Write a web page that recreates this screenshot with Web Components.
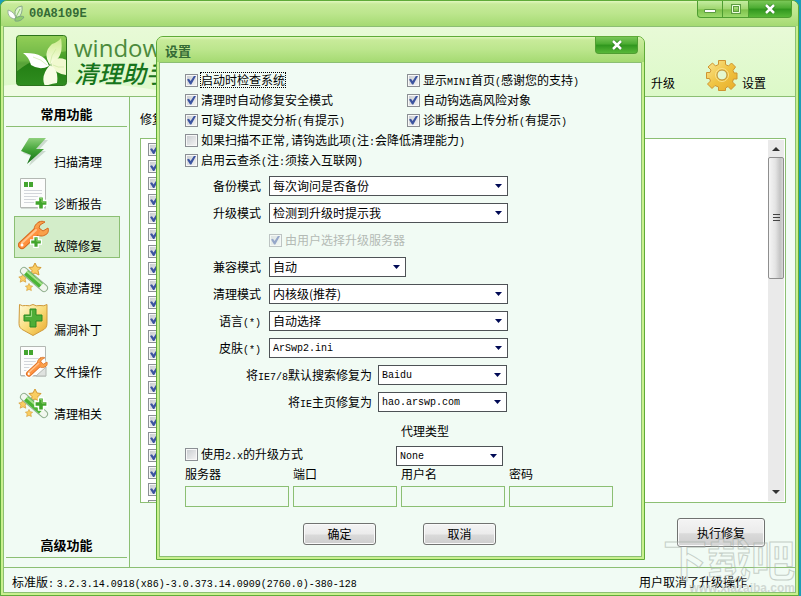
<!DOCTYPE html>
<html lang="zh-CN">
<head>
<meta charset="utf-8">
<title>Windows 清理助手</title>
<style>
  :root {
    --cjk: "Noto Sans CJK SC", sans-serif;
    --mono: "Liberation Mono", "Noto Sans CJK SC", monospace;
    --paper: #f1fbf4;
    --line: #8cbf73;
    --edge: #5fab38;
    --glow: #c9f08f;
  }

  body {
    margin: 0;
    background: #1a9db8;
    font: 12px/16px var(--cjk);
    color: #000;
  }
</style>
</head>
<body>
<cleaner-app></cleaner-app>

<script>
// Latin runs are set in a half-width face beside the full-width characters
const mixed = text => text.replace(/[\x21-\x7e]+/g, run => `<span class="latin">${run}</span>`);

const latinStyle = /* css */`
  .latin {
    font-family: var(--mono);
    font-size: 10px;
    line-height: 10px;
  }
`;

const plus = (x, y, s = 1) => `
  <g transform="translate(${x} ${y}) scale(${s})">
    <path d="M-2-6h4v4h4v4h-4v4h-4v-4h-4v-4h4z" stroke="#fff" stroke-width="3" fill="#fff"/>
    <path d="M-2-6h4v4h4v4h-4v4h-4v-4h-4v-4h4z" fill="#41a52b"/>
    <path d="M-1-5h2v4h4" stroke="#8fd36f" fill="none"/>
  </g>`;

const sheet = `
  <path d="M3 3h25v30H3z" fill="#bfc5bf" opacity=".6"/>
  <path d="M2.500 2.500h25v29h-25z" fill="#fcfdfc" stroke="#b3b8b3"/>
  <path d="M6 6h4v5H6zM11 6h4v5h-4z" fill="#44a52f"/>
  <path d="M6 14.500h18M6 17.500h18M6 20.500h18M6 23.500h12M6 26.500h12" stroke="#d3d6db"/>`;

const star = (x, y, s) => `
  <path transform="translate(${x} ${y}) scale(${s})" d="M0-6l2 4 4 .5-3 3 1 4.500-4-2-4 2 1-4.500-3-3 4-.5z"
    fill="#f9cd62" stroke="#d49a33" stroke-linejoin="round"/>`;

const wand = `
  ${star(17, 9, 1)}${star(5, 18, 0.7)}${star(11, 27, 0.6)}
  <path d="M6 11l20 17" stroke="#8fae8d" stroke-width="8" stroke-linecap="round"/>
  <path d="M6 11l20 17" stroke="#f1f7ee" stroke-width="6" stroke-linecap="round"/>
  <path d="M8 12.500l15 13" stroke="#4bb535" stroke-width="6"/>
  <path d="M9 11.500l15 13" stroke="#a5e28c" stroke-width="2"/>`;

const wrench = `
  <g stroke-linecap="round" stroke-linejoin="round">
    <path d="M4 27L19 13" stroke="#d66a20" stroke-width="8"/>
    <path d="M21 4c-4 2-6 6-4 10s7 5 10 3c3-1 4-4 3-7l-5 3-4-3 1-3 5-3c-2-1-4-1-6 0z" fill="#f9a14b" stroke="#d66a20"/>
    <path d="M4 27L19 13" stroke="#ff9240" stroke-width="6"/>
    <path d="M4 25L18 12" stroke="#ffc58b" stroke-width="2"/>
    <circle cx="4" cy="27" r="1.500" fill="#fff"/>
  </g>`;

const icons = {
  bolt: {
    size: [34, 36],
    body: `
      <linearGradient id="g" x2="0" y2="1"><stop stop-color="#8fd07c"/><stop offset=".5" stop-color="#3da033"/><stop offset="1" stop-color="#126b15"/></linearGradient>
      <path d="M13 6h17L20 17h8L11 32l4-9-10-4z" fill="#b4c4b6" opacity=".6"/>
      <path d="M11 4h17L18 15h8L9 30l4-9-10-4z" fill="url(#g)"/>`,
  },
  report: { size: [34, 36], body: sheet + plus(23, 27, 0.9) },
  wrench: { size: [34, 36], body: wrench + plus(18, 24, 0.8) },
  wand: { size: [34, 36], body: wand },
  shield: {
    size: [34, 36],
    body: `
      <linearGradient id="g" x2="1" y2="1"><stop stop-color="#fffbd9"/><stop offset=".5" stop-color="#f9dc7a"/><stop offset="1" stop-color="#e9a829"/></linearGradient>
      <path d="M1.500 2.500q3 2 6 1 4 1 7.500-1 3 2 7 1 4 1 7-1v19q0 5-5 7l-9 5-9-5q-5-2-5-7z" fill="url(#g)" stroke="#cf9a3c"/>
      <path d="M12 7h6v6h6v6h-6v6h-6v-6H6v-6h6z" fill="#4fae37" stroke="#2c8a24"/>
      <path d="M13.500 8.500v6h-6" fill="none" stroke="#9dda82"/>`,
  },
  fileop: {
    size: [34, 36],
    body: `${sheet}<path d="M18 32l10-9v9z" fill="#dfe2df" stroke="#b3b8b3"/>
      <g transform="translate(8 11) scale(.7)"><path d="M4 27L22 10" stroke="#fff" stroke-width="12" stroke-linecap="round"/>${wrench}</g>`,
  },
  wandplus: { size: [34, 36], body: wand + plus(23, 18, 0.9) },
  gear: {
    size: [32, 32],
    body: `
      <linearGradient id="g" x2="1" y2="1"><stop stop-color="#fbe796"/><stop offset=".5" stop-color="#f0c443"/><stop offset="1" stop-color="#e8ac27"/></linearGradient>
      <path d="M12.500 1.500h7v4l3 1.500 3-3 4 4-2.500 3.500 1 2.500h3v6h-3.500l-1 3 3 3-4.500 4.500-3-3-2.500 1.500v2.500h-7V28L9 26.500l-3 3L1.500 25l3-3-1-2.500H.5v-6h3.500L5 11 2 8l4.500-4 3 3 3-1.500z"
        fill="url(#g)" stroke="#cf9430" stroke-linejoin="round"/>
      <circle cx="16" cy="16" r="5" fill="#e4f8d2" stroke="#b98c35"/>
      <circle cx="16" cy="16" r="6.500" fill="none" stroke="#fae28b"/>`,
  },
  flower: {
    size: [51, 51],
    body: `
      <linearGradient id="g" x2="0" y2="1"><stop stop-color="#7cc142"/><stop offset=".5" stop-color="#3f9a25"/><stop offset=".55" stop-color="#237e14"/><stop offset="1" stop-color="#2f8d1f"/></linearGradient>
      <linearGradient id="p" x2="0" y2="1"><stop stop-color="#cdeb8c"/><stop offset="1" stop-color="#fbffe8"/></linearGradient>
      <clipPath id="c"><rect x="1" y="1" width="49" height="49" rx="3"/></clipPath>
      <rect x=".5" y=".5" width="50" height="50" rx="3" fill="url(#g)" stroke="#2d741d"/>
      <g clip-path="url(#c)">
        <path d="M0 0h51v16Q20 20 0 37z" fill="#bce77d" opacity=".35"/>
        <path d="M34 30Q26 18 36 9q6-2 9-6 3 18-7 24z" fill="url(#p)"/>
        <path d="M33 31Q24 36 15 30 13 22 7 18q22-1 26 13z" fill="#fff"/>
        <path d="M35 30Q38 20 51 25v15Q39 39 35 30z" fill="#f1f9d0"/>
        <path d="M34 30q9 4 7 18-6 1-12 3-5-10 5-21z" fill="#f8fde4"/>
        <path d="M34 29q1-9 6-15M31 30q-6-6-14-8M37 30q5 3 11 2" fill="none" stroke="#c6e69b" stroke-width=".6"/>
      </g>`,
  },
  leaves: {
    size: [18, 18],
    body: `
      <path d="M8 10Q7 2 15 1q1 8-4 12z" fill="#dff5d0" stroke="#8aa98b"/>
      <path d="M7 14Q0 12 1 5q7 2 8 9z" fill="#fff" stroke="#9cb39d"/>
      <path d="M8 13q6-3 9-1-3 5-9 4z" fill="#8fce6e" stroke="#7ea67f"/>
      <path d="M9 12l4-8" stroke="#8cc46c"/>`,
  },
};

class AppIcon extends HTMLElement {
  connectedCallback() {
    const { size: [w, h], body } = icons[this.getAttribute("name")];
    this.attachShadow({ mode: "open" }).innerHTML = /* html */`
    <style>
      :host { display: block; flex: none; }
      svg { display: block; }
    </style>
    <svg width="${w}" height="${h}" viewBox="0 0 ${w} ${h}" aria-hidden="true">${body}</svg>`;
  }
}

customElements.define("app-icon", AppIcon);

// Skinned frame shared by the main window and its dialogs
class SkinWindow extends HTMLElement {
  static get styles() {
    return /* css */`
      :host {
        display: flex;
        flex-direction: column;
        box-sizing: border-box;
        border: 1px solid var(--edge);
        border-radius: 7px 7px 0 0;
        background: var(--glow);
      }

      header {
        display: flex;
        align-items: center;
        gap: 4px;
        box-sizing: border-box;
        height: 25px;
        padding: 0 6px;
        border-radius: 6px 6px 0 0;
        background: linear-gradient(#e2f8bf, #c8eb9a 3px, #bce68d 50%, #a5da72);
      }

      h1 {
        flex: 1;
        margin: 0;
        font: bold 12px/16px var(--mono);
        color: #346b35;
      }

      :host([role="dialog"]) h1 {
        padding: 2px 0 0 2px;
        font: bold 13px/16px var(--cjk);
      }

      .buttons {
        display: flex;
        align-self: flex-start;
      }

      button {
        display: grid;
        place-items: center;
        width: 26px;
        height: 17px;
        padding: 0;
        border: 1px solid #4f9e31;
        border-top: 0;
        border-left-width: 0;
        background: linear-gradient(#c4eda0, #9fd66f 50%, #7fc24c 55%, #9bda6c);
      }

      button:first-child {
        border-left-width: 1px;
        border-bottom-left-radius: 4px;
      }

      button.close {
        width: 43px;
        border-bottom-right-radius: 4px;
        background: linear-gradient(#79c757, #4aab30 45%, #2f961d 50%, #58b838);
      }

      main {
        flex: 1;
        display: flex;
        flex-direction: column;
        min-height: 0;
        margin: 0 2px 2px;
        border: 1px solid var(--line);
        background: var(--paper);
      }
    `;
  }

  connectedCallback() {
    const tools = this.hasAttribute("resizable") ? `
      <button aria-label="最小化"><svg width="12" height="9"><path d="M.5 4.500h11v3H.5z" fill="#fff" stroke="#5d9c42"/></svg></button>
      <button aria-label="最大化"><svg width="10" height="10"><path d="M1.500 1.500h7v7h-7z" fill="none" stroke="#5d9c42" stroke-width="3"/><path d="M1.500 1.500h7v7h-7z" fill="none" stroke="#efffe0"/></svg></button>` : "";
    this.attachShadow({ mode: "open" }).innerHTML = /* html */`
    <style>${SkinWindow.styles}</style>
    <header>
      <slot name="icon"></slot>
      <h1>${this.getAttribute("heading")}</h1>
      <div class="buttons">
        ${tools}
        <button class="close" aria-label="关闭"><svg width="12" height="10"><path d="M2 1l8 8M10 1L2 9" stroke="#277d1a" stroke-width="4"/><path d="M2 1l8 8M10 1L2 9" stroke="#fff" stroke-width="2.500"/></svg></button>
      </div>
    </header>
    <main><slot></slot></main>`;
  }
}

customElements.define("skin-window", SkinWindow);

class NavItem extends HTMLElement {
  connectedCallback() {
    this.attachShadow({ mode: "open" }).innerHTML = /* html */`
    <style>
      :host { display: block; }

      button {
        display: flex;
        align-items: flex-end;
        gap: 2px;
        box-sizing: border-box;
        width: 100%;
        height: 42px;
        padding: 0 0 3px 3px;
        border: 1px solid transparent;
        background: none;
        font: inherit;
        color: inherit;
      }

      :host([active]) button {
        border-color: var(--line);
        background: #d3edc9;
      }
    </style>
    <button><app-icon name="${this.getAttribute("icon")}"></app-icon><slot></slot></button>`;
  }
}

customElements.define("nav-item", NavItem);

class CheckBox extends HTMLElement {
  static get styles() {
    return /* css */`
      :host {
        display: block;
        white-space: nowrap;
      }

      label {
        display: flex;
        align-items: center;
        gap: 2px;
      }

      input {
        appearance: none;
        display: grid;
        place-items: center;
        flex: none;
        box-sizing: border-box;
        width: 13px;
        height: 13px;
        margin: 0;
        border: 1px solid #8b8f94;
        outline: 1px solid #f7f7f7;
        outline-offset: -2px;
        background: linear-gradient(135deg, #c6cace, #f6f6f6);
      }

      input:checked::before {
        content: "";
        width: 9px;
        height: 9px;
        background: #3d55a0;
        clip-path: polygon(0 45%, 22% 36%, 40% 62%, 80% 0, 100% 6%, 48% 100%, 34% 100%);
      }

      .text {
        padding: 0 1px;
      }

      :host([focused]) .text {
        outline: 1px dotted #000;
        outline-offset: -1px;
      }

      input:disabled {
        opacity: .5;
      }

      input:disabled + .text {
        color: #b4bab5;
      }
      ${latinStyle}
    `;
  }

  connectedCallback() {
    const label = this.getAttribute("label") ?? "";
    const flags = ["checked", "disabled"].filter(f => this.hasAttribute(f)).join(" ");
    this.attachShadow({ mode: "open" }).innerHTML = /* html */`
    <style>${CheckBox.styles}</style>
    <label><input type="checkbox" ${flags}>${label && `<span class="text">${mixed(label)}</span>`}</label>`;
  }
}

customElements.define("check-box", CheckBox);

class ComboField extends HTMLElement {
  static get styles() {
    return /* css */`
      :host {
        display: flex;
        align-items: center;
        gap: 8px;
        white-space: nowrap;
      }

      label {
        width: var(--label, 76px);
        text-align: right;
      }

      select {
        appearance: none;
        box-sizing: border-box;
        width: var(--field, 239px);
        height: 20px;
        padding: 0 16px 0 3px;
        border: 1px solid #4e5256;
        border-radius: 0;
        background: #fff url("data:image/svg+xml,%3Csvg xmlns='http://www.w3.org/2000/svg' width='7' height='4'%3E%3Cpath d='M0 0h7L3.500 4z' fill='%23000a55'/%3E%3C/svg%3E") no-repeat right 5px center;
        font: inherit;
        line-height: 16px;
        color: #000;
      }

      select.latin {
        padding-top: 2px;
        font: 10px/14px var(--mono);
      }

      :host([stacked]) {
        flex-direction: column;
        align-items: flex-start;
        gap: 7px;
      }

      :host([stacked]) label {
        box-sizing: border-box;
        padding-left: 5px;
        text-align: left;
      }
      ${latinStyle}
    `;
  }

  connectedCallback() {
    const value = this.getAttribute("value");
    const latin = /^[\x20-\x7e]+$/.test(value) ? "latin" : "";
    this.attachShadow({ mode: "open" }).innerHTML = /* html */`
    <style>${ComboField.styles}</style>
    <label for="combo">${mixed(this.getAttribute("label"))}</label>
    <select id="combo" class="${latin}"><option>${value}</option></select>`;
  }
}

customElements.define("combo-field", ComboField);

class TextField extends HTMLElement {
  connectedCallback() {
    const type = this.getAttribute("type") ?? "text";
    this.attachShadow({ mode: "open" }).innerHTML = /* html */`
    <style>
      :host { display: block; }

      label {
        display: block;
        margin-bottom: 4px;
      }

      input {
        display: block;
        box-sizing: border-box;
        width: 104px;
        height: 21px;
        border: 1px solid var(--line);
        background: transparent;
      }
    </style>
    <label for="text">${this.getAttribute("label")}</label>
    <input id="text" type="${type}">`;
  }
}

customElements.define("text-field", TextField);

class PushButton extends HTMLElement {
  connectedCallback() {
    this.attachShadow({ mode: "open" }).innerHTML = /* html */`
    <style>
      :host { display: block; }

      button {
        display: block;
        box-sizing: border-box;
        width: 100%;
        height: 100%;
        border: 1px solid #707270;
        border-radius: 3px;
        padding: 0;
        background: linear-gradient(#f4f4f4, #ebebeb 50%, #dadada 55%, #cdcdcd);
        box-shadow: inset 0 0 0 1px #fafafa;
        font: inherit;
        line-height: 16px;
        color: #000;
      }
    </style>
    <button><slot></slot></button>`;
  }
}

customElements.define("push-button", PushButton);

class RepairList extends HTMLElement {
  static get styles() {
    return /* css */`
      :host {
        display: flex;
        min-height: 0;
        border: 1px solid var(--line);
        background: #fff;
        overflow: hidden;
      }

      .rows {
        flex: 1;
        height: 0;
        min-height: 100%;
        box-sizing: border-box;
        padding: 3px 7px;
      }

      check-box {
        padding: 1px 0 3px;
      }

      .scroll {
        display: flex;
        flex-direction: column;
        width: 16px;
        margin: 1px;
        background: #eaeaea;
      }

      .scroll svg {
        display: block;
        margin: 6px 4px;
      }

      .thumb {
        flex: 37;
        display: grid;
        place-items: center;
        border: 1px solid #8e8e8e;
        border-radius: 2px;
        background: linear-gradient(to right, #f5f5f5, #e4e4e4 45%, #c4c4c4 80%, #d6d6d6);
      }

      .rest {
        flex: 63;
      }
    `;
  }

  connectedCallback() {
    this.attachShadow({ mode: "open" }).innerHTML = /* html */`
    <style>${RepairList.styles}</style>
    <div class="rows">${"<check-box checked></check-box>".repeat(22)}</div>
    <div class="scroll">
      <svg width="8" height="5"><path d="M0 5l4-4 4 4z" fill="#333"/></svg>
      <div class="thumb"><svg width="7" height="8"><path d="M0 .5h7M0 3.500h7M0 6.500h7" stroke="#444"/></svg></div>
      <div class="rest"></div>
      <svg width="8" height="5"><path d="M0 0h8L4 4z" fill="#333"/></svg>
    </div>`;
  }
}

customElements.define("repair-list", RepairList);

class SettingsForm extends HTMLElement {
  static get styles() {
    return /* css */`
      :host {
        display: block;
        padding: 7px 28px 11px 25px;
      }

      .checks {
        display: grid;
        grid-template-columns: 222px 1fr;
        grid-auto-rows: 20px;
        align-items: center;
      }

      .wide {
        grid-column: 1 / -1;
      }

      .modes {
        display: grid;
        grid-auto-rows: 20px;
        align-items: center;
        gap: 7px;
        margin-top: 6px;
      }

      .indent {
        margin-left: 84px;
      }

      .short {
        --field: 137px;
      }

      .ie {
        --label: 187px;
        --field: 129px;
        gap: 6px;
      }

      .proxy {
        display: flex;
        align-items: flex-end;
        justify-content: space-between;
        margin: 11px 110px 0 0;

        & combo-field {
          --label: 107px;
          --field: 107px;
        }

        & check-box {
          padding-bottom: 4px;
        }
      }

      .account {
        display: flex;
        gap: 4px;
      }

      .actions {
        display: flex;
        gap: 47px;
        margin: 16px 0 0 118px;

        & push-button {
          width: 73px;
          height: 22px;
        }
      }
    `;
  }

  connectedCallback() {
    this.attachShadow({ mode: "open" }).innerHTML = /* html */`
    <style>${SettingsForm.styles}</style>
    <div class="checks">
      <check-box checked focused label="启动时检查系统"></check-box>
      <check-box checked label="显示MINI首页(感谢您的支持)"></check-box>
      <check-box checked label="清理时自动修复安全模式"></check-box>
      <check-box checked label="自动钩选高风险对象"></check-box>
      <check-box checked label="可疑文件提交分析(有提示)"></check-box>
      <check-box checked label="诊断报告上传分析(有提示)"></check-box>
      <check-box class="wide" label="如果扫描不正常,请钩选此项(注:会降低清理能力)"></check-box>
      <check-box class="wide" checked label="启用云查杀(注:须接入互联网)"></check-box>
    </div>
    <div class="modes">
      <combo-field label="备份模式" value="每次询问是否备份"></combo-field>
      <combo-field label="升级模式" value="检测到升级时提示我"></combo-field>
      <check-box class="indent" checked disabled label="由用户选择升级服务器"></check-box>
      <combo-field class="short" label="兼容模式" value="自动"></combo-field>
      <combo-field label="清理模式" value="内核级(推荐)"></combo-field>
      <combo-field label="语言(*)" value="自动选择"></combo-field>
      <combo-field label="皮肤(*)" value="ArSwp2.ini"></combo-field>
      <combo-field class="ie" label="将IE7/8默认搜索修复为" value="Baidu"></combo-field>
      <combo-field class="ie" label="将IE主页修复为" value="hao.arswp.com"></combo-field>
    </div>
    <div class="proxy">
      <check-box label="使用2.x的升级方式"></check-box>
      <combo-field stacked label="代理类型" value="None"></combo-field>
    </div>
    <div class="account">
      <text-field label="服务器"></text-field>
      <text-field label="端口"></text-field>
      <text-field label="用户名"></text-field>
      <text-field label="密码" type="password"></text-field>
    </div>
    <div class="actions">
      <push-button>确定</push-button>
      <push-button>取消</push-button>
    </div>`;
  }
}

customElements.define("settings-form", SettingsForm);

class CleanerApp extends HTMLElement {
  static get styles() {
    return /* css */`
      :host {
        display: block;
        position: relative;
        padding-right: 2px;
        overflow: hidden;
      }

      .main {
        height: 100vh;
      }

      .banner {
        display: flex;
        align-items: center;
        gap: 7px;
        box-sizing: border-box;
        height: 70px;
        padding: 0 29px 2px 12px;
        border-bottom: 1px solid var(--line);
        background:
          radial-gradient(ellipse 300px 90px at 60px 110px, #effce3 60%, transparent 61%),
          linear-gradient(#e8fad7, #dcf9c8);
      }

      .brand {
        flex: 1;
        white-space: nowrap;
      }

      .brand b {
        display: block;
        font: 24px/24px "Open Sans", sans-serif;
        color: #4c8b3d;
      }

      .brand i {
        display: block;
        font: italic 500 24px/26px var(--cjk);
        color: #16741c;
      }

      .tool {
        display: flex;
        align-items: flex-end;
        gap: 4px;
        height: 44px;
        margin-left: 24px;
        padding-bottom: 3px;
        box-sizing: border-box;
        align-self: flex-end;
        color: #000;
        text-decoration: none;
      }

      .body {
        flex: 1;
        display: flex;
        min-height: 0;
      }

      nav {
        display: flex;
        flex-direction: column;
        box-sizing: border-box;
        width: 126px;
        padding: 8px 2px 9px;
        border-right: 1px solid var(--line);
      }

      h2 {
        margin: 0;
        padding-bottom: 3px;
        border-bottom: 1px solid var(--line);
        font: bold 13px/18px var(--cjk);
        text-align: center;
      }

      .items {
        flex: 1;
        padding: 5px 7px 0 8px;
      }

      .page {
        flex: 1;
        display: flex;
        flex-direction: column;
        padding: 14px 9px 20px 10px;
      }

      .page p {
        margin: 0 0 11px;
      }

      repair-list {
        flex: 1;
      }

      .run {
        align-self: flex-end;
        width: 88px;
        height: 29px;
        margin: 15px 21px 0 0;
      }

      footer {
        display: flex;
        justify-content: space-between;
        padding: 6px 42px 2px 8px;
        border-top: 1px solid var(--line);
      }

      .dialog {
        position: absolute;
        top: 36px;
        left: 156px;
      }

      .mark {
        position: absolute;
        right: 6px;
        bottom: 2px;
        text-align: right;
        pointer-events: none;
        opacity: .6;
      }

      .mark b {
        display: block;
        font: 700 44px/48px var(--cjk);
        color: rgba(255, 255, 255, .3);
        -webkit-text-stroke: 1px #a9b3ab;
      }

      .mark small {
        display: block;
        font: bold 12px/12px "Liberation Sans", sans-serif;
        color: #bcc4bd;
      }
      ${latinStyle}
    `;
  }

  connectedCallback() {
    this.attachShadow({ mode: "open" }).innerHTML = /* html */`
    <style>${CleanerApp.styles}</style>
    <skin-window class="main" heading="00A8109E" resizable>
      <app-icon slot="icon" name="leaves"></app-icon>
      <div class="banner">
        <app-icon name="flower"></app-icon>
        <div class="brand"><b>windows</b><i>清理助手</i></div>
        <a class="tool" href="#update"><span>升级</span></a>
        <a class="tool" href="#settings"><app-icon name="gear"></app-icon><span>设置</span></a>
      </div>
      <div class="body">
        <nav>
          <h2>常用功能</h2>
          <div class="items">
            <nav-item icon="bolt">扫描清理</nav-item>
            <nav-item icon="report">诊断报告</nav-item>
            <nav-item icon="wrench" active>故障修复</nav-item>
            <nav-item icon="wand">痕迹清理</nav-item>
            <nav-item icon="shield">漏洞补丁</nav-item>
            <nav-item icon="fileop">文件操作</nav-item>
            <nav-item icon="wandplus">清理相关</nav-item>
          </div>
          <h2>高级功能</h2>
        </nav>
        <div class="page">
          <p>修复</p>
          <repair-list></repair-list>
          <push-button class="run">执行修复</push-button>
        </div>
      </div>
      <footer>
        <span>${mixed("标准版: 3.2.3.14.0918(x86)-3.0.373.14.0909(2760.0)-380-128")}</span>
        <span>${mixed("用户取消了升级操作.")}</span>
      </footer>
    </skin-window>
    <skin-window class="dialog" role="dialog" heading="设置">
      <settings-form></settings-form>
    </skin-window>
    <div class="mark"><b>下载吧</b><small>www.xiazaiba.com</small></div>`;
  }
}

customElements.define("cleaner-app", CleanerApp);
</script>
</body>
</html>
